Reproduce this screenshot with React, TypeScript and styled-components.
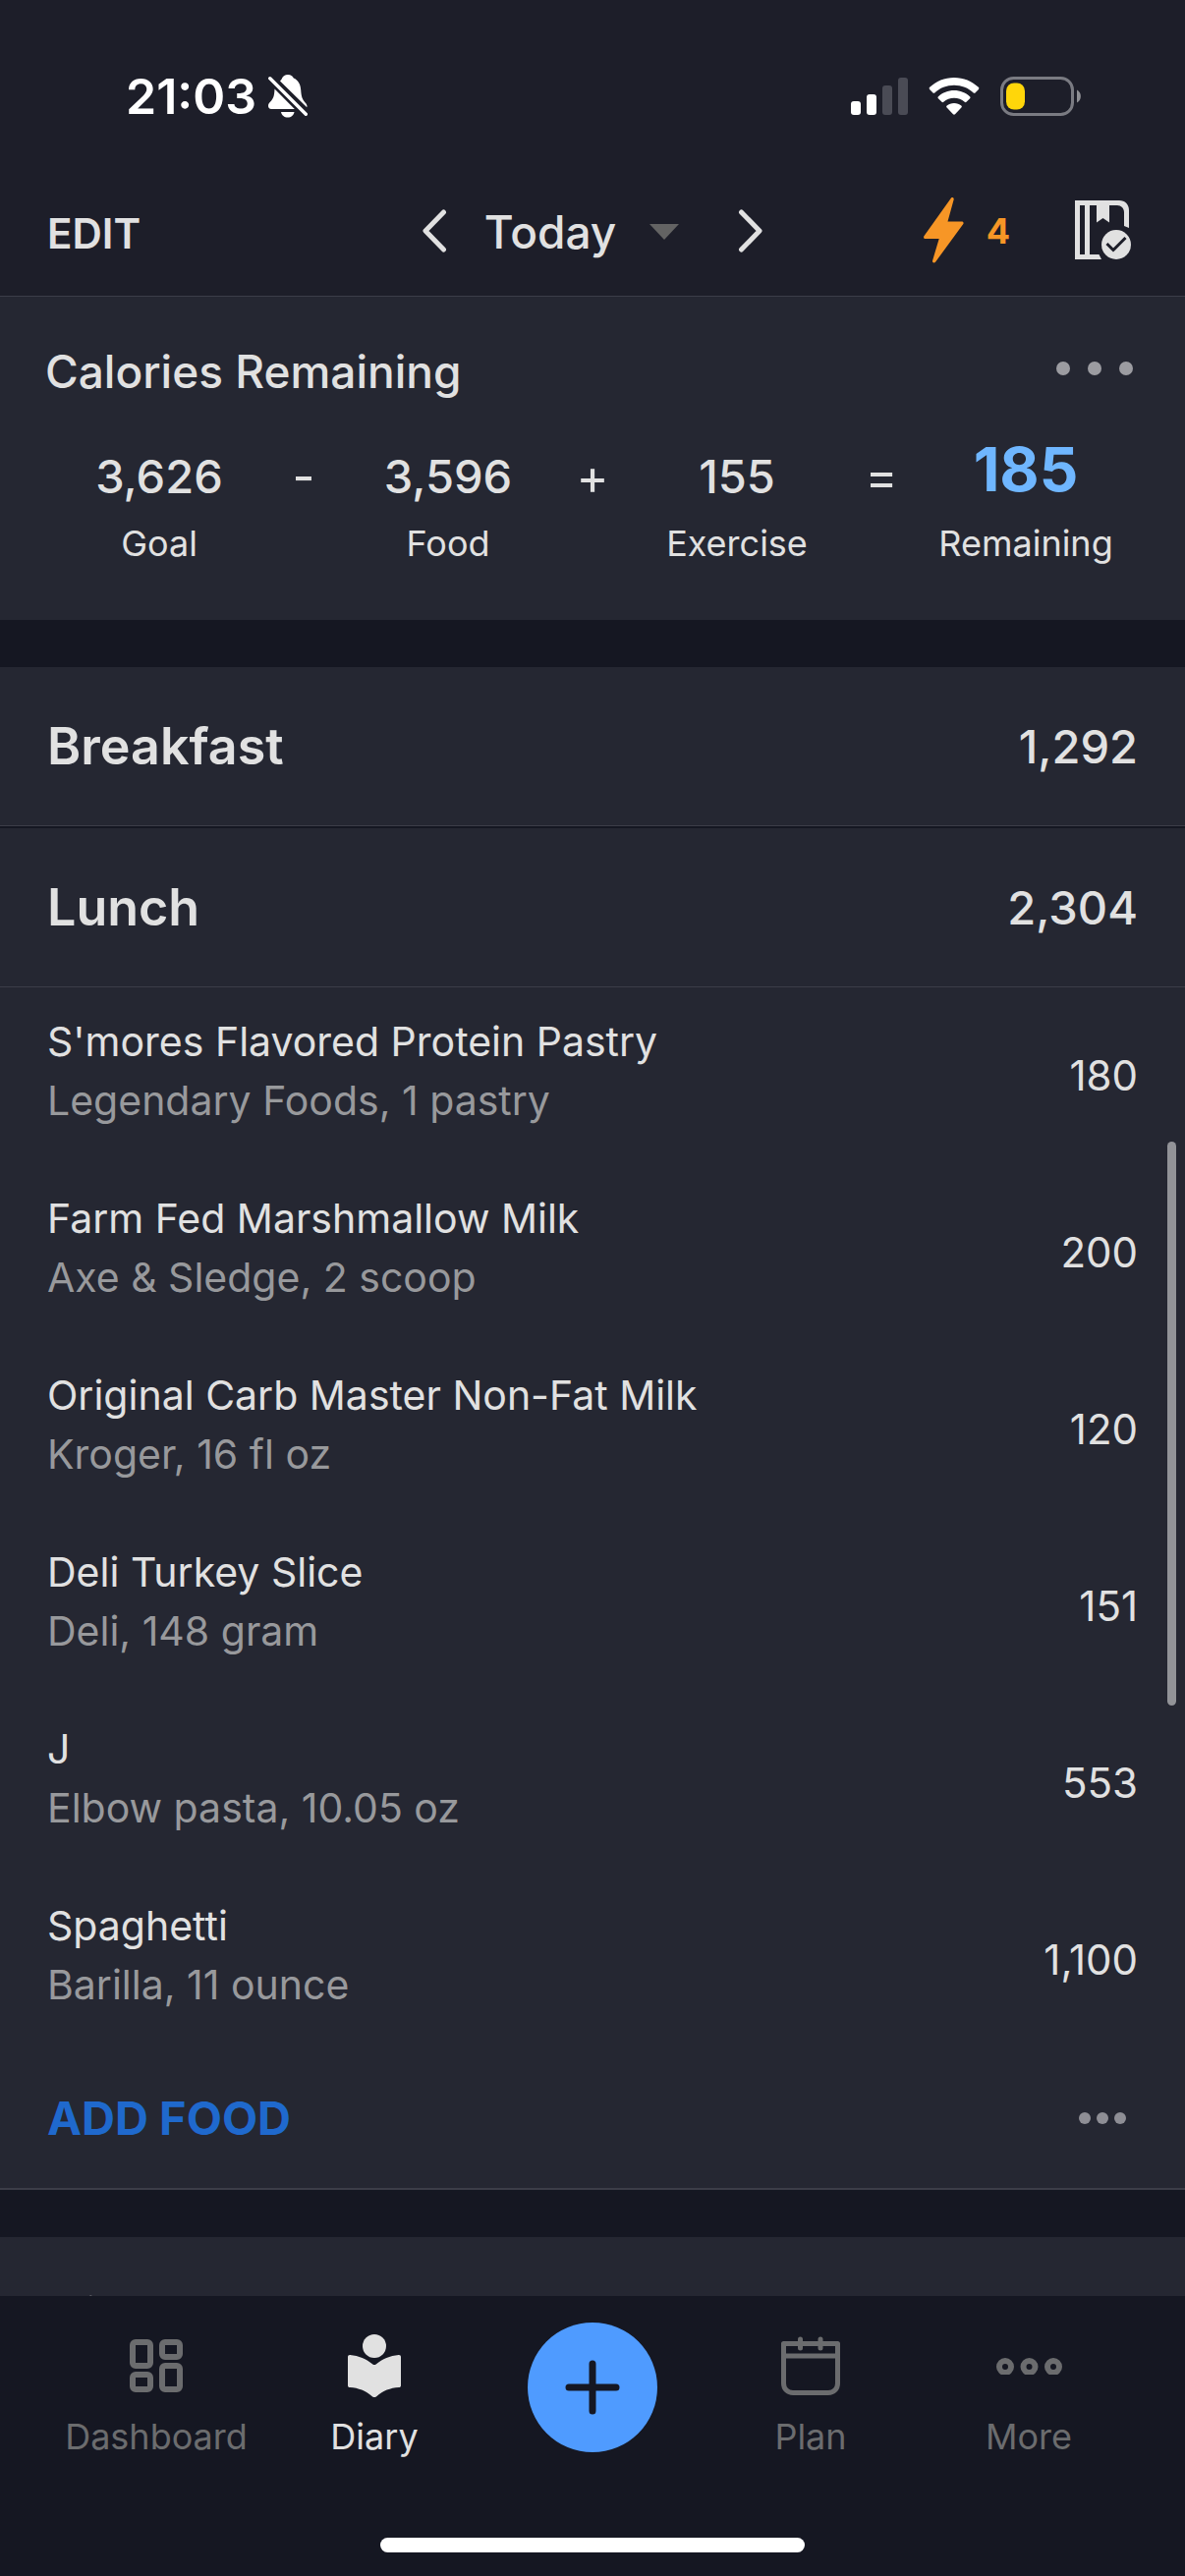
import React from "react";
import styled, { createGlobalStyle } from "styled-components";

const color = {
  header: "#1d1e29",
  card: "#252732",
  page: "#151722",
  text: "#e1e1e1",
  muted: "#98999c",
  faint: "#6b6c6e",
  line: "#3c3d48",
  link: "#1f69cd",
  blue: "#4f9bff",
  sky: "#6fb6ff",
  orange: "#f79626",
};

const GlobalStyle = createGlobalStyle`
  *, *::before, *::after { box-sizing: border-box; }
  body {
    margin: 0;
    background: ${color.page};
    color: ${color.text};
    font-family: Inter, "Liberation Sans", sans-serif;
  }
  h1, h2, h3, p, ul, dl, dd { margin: 0; padding: 0; font-weight: inherit; }
  ul { list-style: none; }
  svg { display: block; }
`;

const Screen = styled.div`
  display: flex;
  flex-direction: column;
  height: 100vh;
  overflow: hidden;
`;

const Header = styled.header`
  background: ${color.header};
  border-bottom: 1px solid ${color.line};
`;

const StatusBar = styled.div`
  display: flex;
  align-items: center;
  justify-content: space-between;
  height: 168px;
  padding: 28px 105px 0 128px;
`;

const StatusGroup = styled.div<{ $gap: number }>`
  display: flex;
  align-items: center;
  gap: ${(p) => p.$gap}px;
`;

const Clock = styled.time`
  color: #fff;
  font-size: 50px;
  line-height: 60px;
  font-weight: 600;
`;

const Toolbar = styled.div`
  display: grid;
  grid-template-columns: 1fr auto 1fr;
  align-items: center;
  height: 133px;
  padding: 0 48px;
`;

const PlainButton = styled.button`
  display: flex;
  align-items: center;
  padding: 0;
  border: 0;
  background: none;
  color: inherit;
  font: inherit;
  cursor: pointer;
`;

const EditButton = styled(PlainButton)`
  justify-self: start;
  padding-top: 6px;
  font-size: 42px;
  line-height: 48px;
  font-weight: 600;
`;

const DateSwitcher = styled.div`
  display: flex;
  align-items: center;
  gap: 38px;
`;

const DateButton = styled(PlainButton)`
  gap: 34px;
  font-size: 46px;
  line-height: 56px;
  font-weight: 500;
  padding: 2px 22px 0 0;
`;

const ToolbarEnd = styled.div`
  display: flex;
  align-items: center;
  justify-content: flex-end;
  gap: 66px;
  padding-right: 6px;
`;

const Streak = styled(PlainButton)`
  gap: 23px;
  color: ${color.orange};
  font-size: 36px;
  line-height: 44px;
  font-weight: 700;
`;

const ScrollFrame = styled.div`
  position: relative;
  flex: 1;
  min-height: 0;
`;

const ScrollArea = styled.main`
  height: 100%;
  overflow-y: auto;
  scrollbar-width: none;
`;

const ScrollThumb = styled.div`
  position: absolute;
  top: 860px;
  right: 9px;
  width: 9px;
  height: 574px;
  border-radius: 5px;
  background: #929398;
`;

const Card = styled.section<{ $gapAfter?: number; $ruled?: boolean }>`
  background: ${color.card};
  margin-bottom: ${(p) => p.$gapAfter ?? 0}px;
  border-bottom: ${(p) => (p.$ruled ? `2px solid ${color.line}` : "0")};
`;

const SummaryHead = styled.div`
  display: flex;
  align-items: center;
  justify-content: space-between;
  padding: 46px 53px 0 46px;
`;

const SummaryOptions = styled(PlainButton)`
  padding-bottom: 6px;
`;

const SummaryTitle = styled.h1`
  font-size: 46px;
  line-height: 60px;
  font-weight: 500;
`;

const Equation = styled.dl`
  display: grid;
  grid-template-columns: 228fr 66fr 228fr 66fr 228fr 66fr 228fr;
  align-items: end;
  padding: 35px 48px 56px;
`;

const Term = styled.div`
  display: flex;
  flex-direction: column-reverse;
  align-items: center;
`;

const TermLabel = styled.dt`
  font-size: 36px;
  line-height: 44px;
`;

const TermValue = styled.dd<{ $strong?: boolean }>`
  display: flex;
  align-items: flex-end;
  height: 88px;
  padding-bottom: ${(p) => (p.$strong ? 23 : 16)}px;
  font-size: ${(p) => (p.$strong ? 62 : 47)}px;
  line-height: 60px;
  font-weight: ${(p) => (p.$strong ? 700 : 500)};
  color: ${(p) => (p.$strong ? color.sky : "inherit")};
`;

const Operator = styled.div`
  padding-bottom: 60px;
  text-align: center;
  font-size: 50px;
  line-height: 60px;
`;

const MealHead = styled.div`
  display: flex;
  align-items: center;
  justify-content: space-between;
  height: 162px;
  padding: 0 48px;
  border-bottom: 1px solid ${color.line};
`;

const MealTitle = styled.h2`
  font-size: 52px;
  line-height: 60px;
  font-weight: 600;
`;

const MealTotal = styled.span`
  font-size: 47px;
  line-height: 60px;
  font-weight: 500;
`;

const FoodRow = styled.li`
  display: flex;
  align-items: center;
  justify-content: space-between;
  height: 180px;
  padding: 0 48px;
`;

const FoodName = styled.h3`
  font-size: 41px;
  line-height: 60px;
  font-weight: 400;
`;

const FoodDetail = styled.p`
  padding-bottom: 10px;
  color: ${color.muted};
  font-size: 41px;
  line-height: 60px;
`;

const FoodCalories = styled.span`
  font-size: 42px;
  line-height: 60px;
`;

const MealFoot = styled.div`
  display: flex;
  align-items: center;
  justify-content: space-between;
  height: 142px;
  padding: 0 60px 0 48px;
`;

const AddFood = styled(PlainButton)`
  color: ${color.link};
  font-size: 47px;
  line-height: 60px;
  font-weight: 700;
`;

const TabBar = styled.nav`
  display: grid;
  grid-template-columns: repeat(5, 1fr);
  align-items: start;
  padding: 27px 48px 0;
  background: ${color.page};
`;

const Tab = styled.a<{ $active?: boolean }>`
  display: flex;
  flex-direction: column;
  align-items: center;
  gap: 6px;
  color: ${(p) => (p.$active ? color.text : color.faint)};
  font-size: 36px;
  line-height: 44px;
  text-decoration: none;
`;

const TabIcon = styled.span`
  display: grid;
  place-items: center;
  height: 88px;
`;

const AddButton = styled.button`
  display: grid;
  place-items: center;
  justify-self: center;
  width: 132px;
  height: 132px;
  padding: 0;
  border: 0;
  border-radius: 50%;
  background: ${color.blue};
  cursor: pointer;
`;

const HomeBar = styled.div`
  display: flex;
  justify-content: center;
  padding: 81px 0 24px;
  background: ${color.page};
`;

const HomeIndicator = styled.div`
  width: 432px;
  height: 15px;
  border-radius: 8px;
  background: #fff;
`;

const BellOff = () => (
  <svg width="40" height="44" viewBox="0 0 40 44" aria-label="Silent mode" role="img">
    <path fill="#fff" d="M12 6.5C13.5 5 13.6 4.7 14.2 3.300C15.200 1.400 17 0 20 0s4.800 1.500 5.800 3.500c4.800 2 7 6.500 7.400 12 .4 6.500 1.300 9.500 4.600 13.200C39.200 30.300 39.800 31.300 39.300 33.200Z" />
    <path fill="#fff" d="M6.500 14.500 26.800 35H3.200C1 35 0 33.500 0 31.800c0-1.700.8-2.700 2.200-4.200C5 24.600 6.200 22 6.500 14.500Z" />
    <path fill="#fff" d="M13 38h13.500c-.6 3.500-3.300 5.500-6.700 5.500S13.600 41.500 13 38Z" />
    <path stroke="#fff" strokeWidth="3.400" strokeLinecap="round" d="m1.800 3.800 36.500 36.500" />
  </svg>
);

const Signal = () => (
  <svg width="58" height="38" viewBox="0 0 58 38" aria-label="Signal" role="img">
    <rect x="0" y="24" width="10" height="14" rx="3" fill="#fff" />
    <rect x="16" y="17" width="10" height="21" rx="3" fill="#fff" />
    <rect x="32" y="8" width="10" height="30" rx="3" fill="#4a4b55" />
    <rect x="48" y="0" width="10" height="38" rx="3" fill="#4a4b55" />
  </svg>
);

const Wifi = () => (
  <svg width="52" height="38" viewBox="0 0 52 38" fill="#fff" aria-label="Wi-Fi" role="img">
    <path d="M26 0c9.600 0 18.300 3.700 24.800 9.800.7.700.7 1.500.1 2.100l-3.400 3.500c-.5.500-1.200.5-1.800 0C40.500 10.500 33.600 7.700 26 7.700S11.500 10.500 6.300 15.400c-.6.500-1.300.5-1.800 0L1.100 11.900c-.6-.6-.6-1.400.1-2.100C7.700 3.700 16.400 0 26 0Z" />
    <path d="M26 13c6.200 0 11.800 2.300 16 6.200.7.700.7 1.400.1 2l-3.600 3.600c-.5.500-1.200.5-1.800 0C33.800 22.200 30.100 20.700 26 20.700s-7.800 1.500-10.700 4.100c-.6.500-1.300.5-1.800 0l-3.600-3.600c-.6-.6-.6-1.300.1-2C14.200 15.300 19.800 13 26 13Z" />
    <path d="M26 26c2.900 0 5.400 1 7.300 2.600.7.600.7 1.300.1 1.900l-6.400 6.700c-.6.600-1.400.6-2 0l-6.400-6.700c-.6-.6-.6-1.300.1-1.900C20.600 27 23.100 26 26 26Z" />
  </svg>
);

const Battery = () => (
  <svg width="83" height="40" viewBox="0 0 83 40" aria-label="Battery low" role="img">
    <rect x="1.500" y="1.500" width="72" height="37" rx="12" fill="none" stroke="#7a7b82" strokeWidth="3" />
    <path d="M78 13.500c5.200 2.600 5.200 10.400 0 13Z" fill="#8e8f94" />
    <rect x="6" y="6.500" width="19" height="27" rx="8" fill="#ffd60a" />
  </svg>
);

const Chevron = ({ next }: { next?: boolean }) => (
  <svg width="26" height="44" viewBox="0 0 26 44" fill="none" stroke={color.text} strokeWidth="5" strokeLinecap="round" strokeLinejoin="round" aria-hidden="true">
    <path d={next ? "M3.500 3 22 22 3.500 41" : "M22.500 3 4 22l18.500 19"} />
  </svg>
);

const Caret = () => (
  <svg width="30" height="16" viewBox="0 0 30 16" aria-hidden="true">
    <path d="M0 0h30L15 16Z" fill="#636363" />
  </svg>
);

const Bolt = () => (
  <svg width="41" height="67" viewBox="0 0 41 67" fill="currentColor" aria-hidden="true">
    <path d="M28 .6c1.300-1.100 3-.2 2.700 1.500L24.500 24.500H38.700c1.600 0 2.400 1.300 1.600 2.600L12 65.700c-1.200 1.500-3.400.6-3-1.300L15.700 42H2C.3 42-.4 40.600.4 39.300Z" />
  </svg>
);

const DiaryCheck = () => (
  <svg width="58" height="61" viewBox="0 0 58 61" aria-hidden="true">
    <path
      fill={color.text}
      fillRule="evenodd"
      d="M0 0h45c6 0 10 4 10 10v18l-5-2V12c0-4-3-7-7-7H35v17.500L28.500 18 22 22.500V5h-7v50h9.500l2.500 5H0ZM5 5v50h5V5Z"
    />
    <circle cx="42" cy="45" r="15" fill={color.text} />
    <path fill="none" stroke={color.header} strokeWidth="3" d="m32.500 44 6.500 6.500L51.500 38" />
  </svg>
);

const Dots = ({ size, pitch, fill }: { size: number; pitch: number; fill: string }) => (
  <svg width={pitch * 2 + size} height={size} aria-hidden="true">
    {[0, 1, 2].map((i) => (
      <circle key={i} cx={size / 2 + i * pitch} cy={size / 2} r={size / 2} fill={fill} />
    ))}
  </svg>
);

const DashboardIcon = () => (
  <svg width="54" height="54" viewBox="0 0 54 54" fill="none" stroke="currentColor" strokeWidth="6" aria-hidden="true">
    <rect x="3" y="3" width="18" height="24" rx="3" />
    <rect x="33" y="3" width="18" height="15" rx="3" />
    <rect x="3" y="36" width="18" height="15" rx="3" />
    <rect x="33" y="27" width="18" height="24" rx="3" />
  </svg>
);

const DiaryIcon = () => (
  <svg width="54" height="64" viewBox="0 0 54 64" fill="currentColor" aria-hidden="true">
    <circle cx="27" cy="12" r="12" />
    <path d="M0 23c0-1.500.8-2.200 2.300-2.100C11 21.600 19 25 25 30.200c1.500 1.200 2.500 1.200 4 0C35 25 43 21.600 51.700 20.900c1.500-.1 2.300.6 2.300 2.100v29c0 1.400-.8 2-2 2.100-9 .6-16 3.400-22.500 8.900-1.800 1.400-3.200 1.400-5 0C18 57.500 11 54.700 2 54.100.8 54 0 53.400 0 52Z" />
  </svg>
);

const PlanIcon = () => (
  <svg width="60" height="60" viewBox="0 0 60 60" fill="none" stroke="currentColor" strokeWidth="5" strokeLinecap="round" strokeLinejoin="round" aria-hidden="true">
    <path d="M2.500 7.500h55V48c0 5.500-4 9.500-9.500 9.500H12c-5.500 0-9.500-4-9.500-9.500Z" />
    <path d="M3 20h54M19.500 3v9M40 3v9" />
  </svg>
);

const MoreIcon = () => (
  <svg width="67" height="17" viewBox="0 0 67 17" fill="none" stroke="currentColor" strokeWidth="6" aria-hidden="true">
    <circle cx="9" cy="9" r="6" />
    <circle cx="33.500" cy="9" r="6" />
    <circle cx="58" cy="9" r="6" />
  </svg>
);

const PlusIcon = () => (
  <svg width="56" height="56" viewBox="0 0 56 56" stroke={color.page} strokeWidth="7" strokeLinecap="round" aria-hidden="true">
    <path d="M28 4v48M4 28h48" />
  </svg>
);

const lunch = [
  { name: "S'mores Flavored Protein Pastry", detail: "Legendary Foods, 1 pastry", calories: "180" },
  { name: "Farm Fed Marshmallow Milk", detail: "Axe & Sledge, 2 scoop", calories: "200" },
  { name: "Original Carb Master Non-Fat Milk", detail: "Kroger, 16 fl oz", calories: "120" },
  { name: "Deli Turkey Slice", detail: "Deli, 148 gram", calories: "151" },
  { name: "J", detail: "Elbow pasta, 10.05 oz", calories: "553" },
  { name: "Spaghetti", detail: "Barilla, 11 ounce", calories: "1,100" },
];

const SummaryTerm = ({ value, label, strong }: { value: string; label: string; strong?: boolean }) => (
  <Term>
    <TermLabel>{label}</TermLabel>
    <TermValue $strong={strong}>{value}</TermValue>
  </Term>
);

const NavTab = ({ label, icon, active }: { label: string; icon: React.ReactNode; active?: boolean }) => (
  <Tab href={`#${label.toLowerCase()}`} $active={active} aria-current={active ? "page" : undefined}>
    <TabIcon>{icon}</TabIcon>
    {label}
  </Tab>
);

export default function App() {
  return (
    <Screen>
      <GlobalStyle />
      <Header>
        <StatusBar>
          <StatusGroup $gap={12}>
            <Clock>21:03</Clock>
            <BellOff />
          </StatusGroup>
          <StatusGroup $gap={21}>
            <Signal />
            <Wifi />
            <Battery />
          </StatusGroup>
        </StatusBar>
        <Toolbar>
          <EditButton type="button">EDIT</EditButton>
          <DateSwitcher>
            <PlainButton type="button" aria-label="Previous day">
              <Chevron />
            </PlainButton>
            <DateButton type="button">
              Today
              <Caret />
            </DateButton>
            <PlainButton type="button" aria-label="Next day">
              <Chevron next />
            </PlainButton>
          </DateSwitcher>
          <ToolbarEnd>
            <Streak type="button" aria-label="Streak: 4">
              <Bolt />4
            </Streak>
            <PlainButton type="button" aria-label="Complete diary">
              <DiaryCheck />
            </PlainButton>
          </ToolbarEnd>
        </Toolbar>
      </Header>

      <ScrollFrame>
        <ScrollArea>
          <Card $gapAfter={48}>
            <SummaryHead>
              <SummaryTitle>Calories Remaining</SummaryTitle>
              <SummaryOptions type="button" aria-label="Summary options">
                <Dots size={14} pitch={32} fill="#9c9ca1" />
              </SummaryOptions>
            </SummaryHead>
            <Equation>
              <SummaryTerm value="3,626" label="Goal" />
              <Operator>-</Operator>
              <SummaryTerm value="3,596" label="Food" />
              <Operator>+</Operator>
              <SummaryTerm value="155" label="Exercise" />
              <Operator>=</Operator>
              <SummaryTerm value="185" label="Remaining" strong />
            </Equation>
          </Card>

          <Card $gapAfter={2}>
            <MealHead>
              <MealTitle>Breakfast</MealTitle>
              <MealTotal>1,292</MealTotal>
            </MealHead>
          </Card>

          <Card $gapAfter={48} $ruled>
            <MealHead>
              <MealTitle>Lunch</MealTitle>
              <MealTotal>2,304</MealTotal>
            </MealHead>
            <ul>
              {lunch.map((food) => (
                <FoodRow key={food.name}>
                  <div>
                    <FoodName>{food.name}</FoodName>
                    <FoodDetail>{food.detail}</FoodDetail>
                  </div>
                  <FoodCalories>{food.calories}</FoodCalories>
                </FoodRow>
              ))}
            </ul>
            <MealFoot>
              <AddFood type="button">ADD FOOD</AddFood>
              <PlainButton type="button" aria-label="Lunch options">
                <Dots size={12} pitch={18} fill="#8e8e95" />
              </PlainButton>
            </MealFoot>
          </Card>

          <Card>
            <MealHead>
              <MealTitle>Dinner</MealTitle>
            </MealHead>
          </Card>
        </ScrollArea>
        <ScrollThumb />
      </ScrollFrame>

      <TabBar>
        <NavTab label="Dashboard" icon={<DashboardIcon />} />
        <NavTab label="Diary" icon={<DiaryIcon />} active />
        <AddButton type="button" aria-label="Add entry">
          <PlusIcon />
        </AddButton>
        <NavTab label="Plan" icon={<PlanIcon />} />
        <NavTab label="More" icon={<MoreIcon />} />
      </TabBar>
      <HomeBar>
        <HomeIndicator />
      </HomeBar>
    </Screen>
  );
}
